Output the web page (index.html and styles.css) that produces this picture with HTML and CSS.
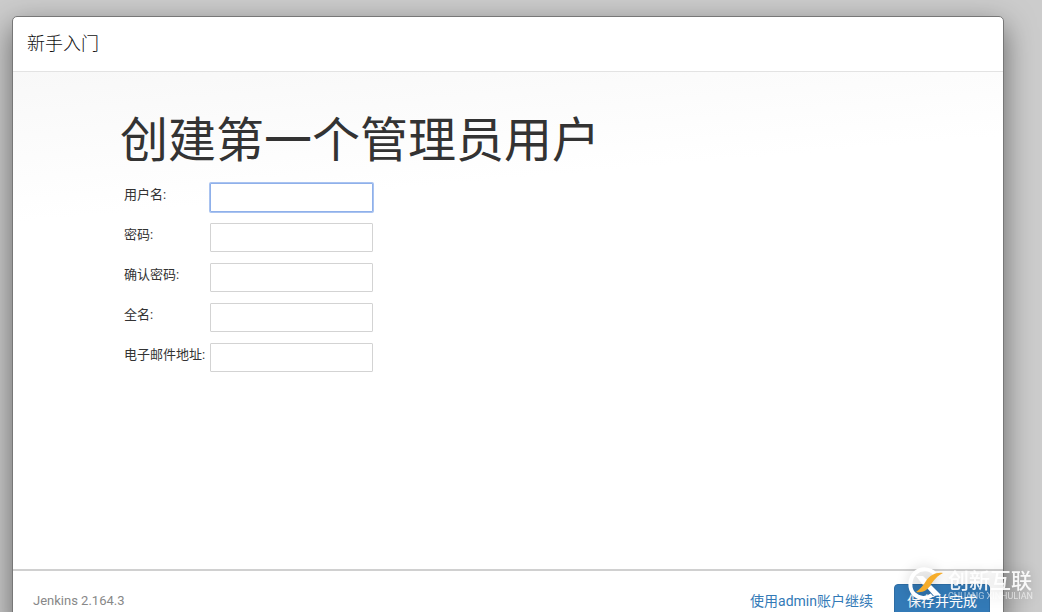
FILE: index.html
```html
<!DOCTYPE html>
<html lang="zh-CN">
<head>
  <meta charset="UTF-8">
  <meta name="viewport" content="width=device-width, initial-scale=1.0">
  <title>新手入门 - Jenkins</title>
  <link rel="stylesheet" href="styles.css">
</head>
<body>
  <div class="modal">
    <div class="modal-header">
      <h4>新手入门</h4>
    </div>

    <div class="modal-body">
      <h1>创建第一个管理员用户</h1>
      <form id="create-user">
        <table class="fields">
          <tr>
            <td><label for="username">用户名:</label></td>
            <td><input type="text" id="username" class="active"></td>
          </tr>
          <tr>
            <td><label for="password1">密码:</label></td>
            <td><input type="password" id="password1"></td>
          </tr>
          <tr>
            <td><label for="password2">确认密码:</label></td>
            <td><input type="password" id="password2"></td>
          </tr>
          <tr>
            <td><label for="fullname">全名:</label></td>
            <td><input type="text" id="fullname"></td>
          </tr>
          <tr>
            <td><label for="email">电子邮件地址:</label></td>
            <td><input type="text" id="email"></td>
          </tr>
        </table>
      </form>
    </div>

    <div class="modal-footer">
      <span class="version">Jenkins 2.164.3</span>
      <a class="btn-link" href="#">使用admin账户继续</a>
      <button class="btn-primary" type="submit" form="create-user">保存并完成</button>
    </div>
  </div>

  <div class="watermark">
    <svg class="logo" viewBox="0 0 36 34" aria-hidden="true">
      <path d="M27 7 C22 1 13 1 7 6 C1 12 1 22 6 27 C11 32 19 32 24 28" fill="none" stroke="#fff" stroke-width="4"/>
      <path d="M8 9 L15 9 L20 14 L15 18 Z" fill="#fff"/>
      <path d="M19 21 L23 18 L33 28 L26 29 Z" fill="#fff"/>
      <path d="M35 6 C28 5 22 8 18 14 C15 19 12 22 8 25 C15 26 19 23 22 19 C26 13 29 9 35 6 Z" fill="#f6ad2b"/>
    </svg>
    <div class="brand">
      <span class="brand-name">创新互联</span>
      <span class="brand-latin">CHUANG XINHULIAN</span>
    </div>
  </div>
</body>
</html>
```

FILE: styles.css
```css
* {
  box-sizing: border-box;
}
body {
  font-family: Roboto, "Noto Sans CJK SC", sans-serif;
  font-size: 13px;
  line-height: 20px;
  background: #ccc;
  margin: 0;
  color: #333;
  height: 100vh;
  overflow: hidden;
}
.modal {
  display: flex;
  flex-direction: column;
  height: calc(100vh + 4px);
  margin: 16px 38px 0 12px;
  background: #fff;
  border: 1px solid #777;
  border-radius: 5px;
  box-shadow: 0 10px 30px rgba(0,0,0,0.5);
}
.modal-header {
  padding: 14px;
  border-bottom: 1px solid #e3e3e3;
}
h4 {
  margin: 0;
  font-size: 18px;
  font-weight: 300;
  line-height: 26px;
  color: #111;
}
.modal-body {
  flex: 1;
  padding: 41px 107px;
  background: linear-gradient(175deg, #f8f8f8, #fff 150px);
}
h1 {
  margin: 0;
  font-size: 48px;
  font-weight: 400;
  line-height: 56px;
}
.fields {
  border-collapse: collapse;
  margin-top: 9px;
}
td {
  height: 40px;
  padding: 0 5px 0 4px;
  vertical-align: top;
}
td + td {
  padding: 5px 0;
}
label {
  display: block;
  padding-top: 7px;
}
input {
  display: block;
  width: 163px;
  height: 29px;
  padding: 4px;
  background: #fff;
  border: 1px solid #d3d3d3;
  border-radius: 1px;
  font: inherit;
}
input.active {
  border-color: #8fb0ea;
  box-shadow: 0 0 0 1px #a9c3f0;
  outline: none;
}
.modal-footer {
  display: flex;
  align-items: center;
  padding: 13px;
  border-top: 2px solid #d0d0d0;
}
.version {
  flex: 1;
  padding-left: 7px;
  color: #888;
}
.btn-link {
  margin-right: 21px;
  font-size: 14px;
  color: #337ab7;
  text-decoration: none;
}
.btn-primary {
  height: 34px;
  padding: 0 12px;
  background: #337ab7;
  border: 1px solid #2e6da4;
  border-radius: 4px;
  font: inherit;
  font-size: 14px;
  color: #fff;
}
.watermark {
  position: absolute;
  right: 9px;
  bottom: 11px;
  display: flex;
  align-items: center;
  gap: 4px;
  color: #fff;
  pointer-events: none;
  filter: drop-shadow(0 0 6px rgba(0,0,0,0.2));
}
.logo {
  width: 36px;
  height: 34px;
}
.brand-name,
.brand-latin {
  display: block;
}
.brand-name {
  font-size: 21px;
  font-weight: 500;
  line-height: 24px;
  opacity: 0.9;
}
.brand-latin {
  font-size: 9px;
  line-height: 6px;
  opacity: 0.6;
}
```
